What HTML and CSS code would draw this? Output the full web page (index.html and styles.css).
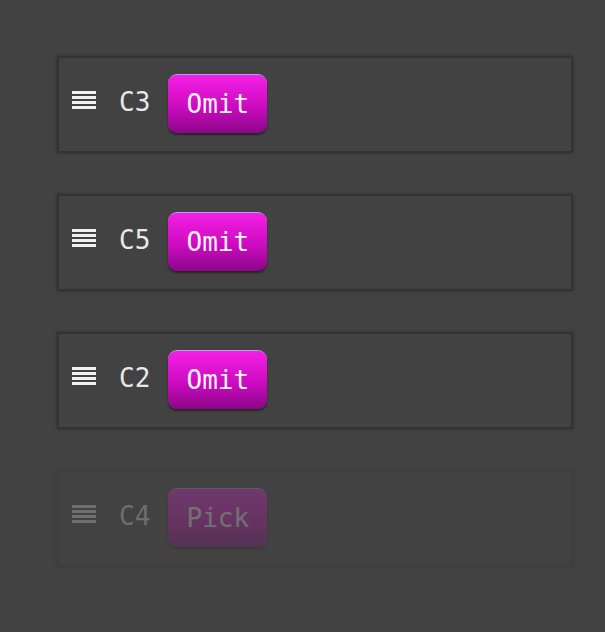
FILE: index.html
```html
<!DOCTYPE html>
<html>
<head>
<meta charset="utf-8">
<link rel="stylesheet" href="styles.css">
</head>
<body>
<div class="list">
  <div class="card">
    <svg class="handle" width="24" height="19" viewBox="0 0 24 19"><rect y="0" width="24" height="3"/><rect y="5" width="24" height="3"/><rect y="10" width="24" height="3"/><rect y="15" width="24" height="3"/></svg>
    <span class="label">C3</span>
    <button class="btn">Omit</button>
  </div>
  <div class="card">
    <svg class="handle" width="24" height="19" viewBox="0 0 24 19"><rect y="0" width="24" height="3"/><rect y="5" width="24" height="3"/><rect y="10" width="24" height="3"/><rect y="15" width="24" height="3"/></svg>
    <span class="label">C5</span>
    <button class="btn">Omit</button>
  </div>
  <div class="card">
    <svg class="handle" width="24" height="19" viewBox="0 0 24 19"><rect y="0" width="24" height="3"/><rect y="5" width="24" height="3"/><rect y="10" width="24" height="3"/><rect y="15" width="24" height="3"/></svg>
    <span class="label">C2</span>
    <button class="btn">Omit</button>
  </div>
  <div class="card card-off">
    <svg class="handle" width="24" height="19" viewBox="0 0 24 19"><rect y="0" width="24" height="3"/><rect y="5" width="24" height="3"/><rect y="10" width="24" height="3"/><rect y="15" width="24" height="3"/></svg>
    <span class="label">C4</span>
    <button class="btn">Pick</button>
  </div>
</div>
</body>
</html>
```
FILE: styles.css
```css
html, body {
  margin: 0;
  padding: 0;
  background: #424242;
  height: 100%;
  overflow: hidden;
}
body {
  font-family: "DejaVu Sans Mono", monospace;
}
.list {
  display: flex;
  flex-direction: column;
  gap: 41px;
  padding: 56px 0 0 57px;
  width: 516px;
}
.card {
  box-sizing: border-box;
  height: 97px;
  border: 2px solid #333;
  box-shadow: 0 0 3px rgba(0,0,0,0.35);
  display: flex;
  align-items: center;
  padding-left: 13px;
  padding-bottom: 1px;
}
.card-off {
  opacity: 0.26;
}
.handle {
  fill: #f0f0f0;
  display: block;
  margin-top: -7px;
}
.label {
  color: #e8e8e8;
  font-size: 26px;
  margin-left: 23px;
  margin-right: 18px;
  position: relative;
  top: -2px;
}
.btn {
  font-family: "DejaVu Sans Mono", monospace;
  font-size: 26px;
  color: #fff4fc;
  width: 99px;
  height: 59px;
  border: none;
  border-top: 1px solid #a7a6ef;
  border-radius: 9px;
  background: linear-gradient(#f51fe6, #cc0bc0 55%, #8c0688);
  box-shadow: 0 2px 2px rgba(0,0,0,0.45);
  padding: 0;
  margin-top: -2px;
}
```
